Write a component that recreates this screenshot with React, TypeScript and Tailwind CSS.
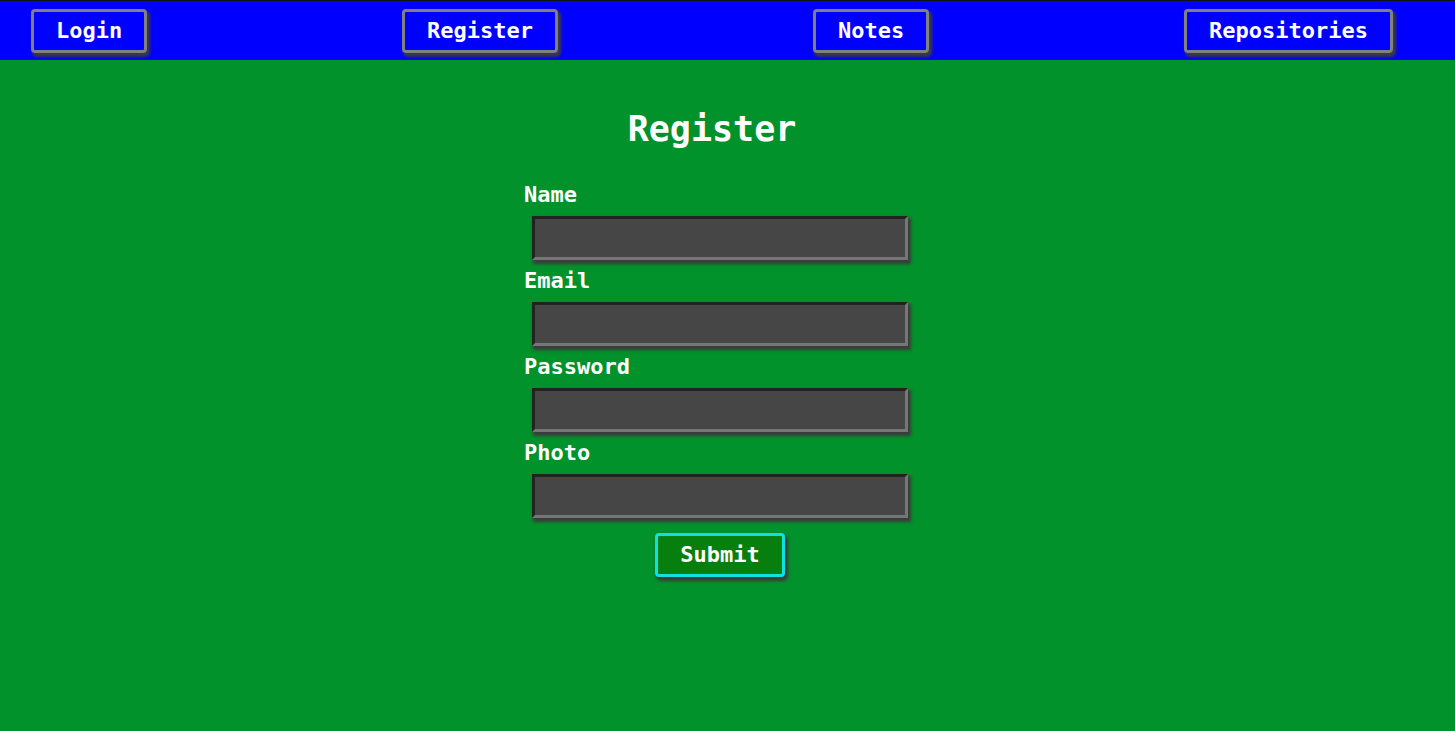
const links = ["Login", "Register", "Notes", "Repositories"];

const fields = [
  { id: "name", label: "Name", type: "text" },
  { id: "email", label: "Email", type: "email" },
  { id: "password", label: "Password", type: "password" },
  { id: "photo", label: "Photo", type: "text" },
];

export default function App() {
  return (
    <div className="min-h-screen bg-[#02922b] font-['DejaVu_Sans_Mono',monospace] text-[22px] leading-[26px] font-bold text-white">
      <nav className="flex items-center justify-between border-t border-[#111111] bg-[#0000ff] pt-2 pr-[62px] pb-[7px] pl-[31px]">
        {links.map((link) => (
          <a
            key={link}
            href={`#${link.toLowerCase()}`}
            className="flex h-11 items-center rounded-sm border-3 border-[#808080] px-[22px] shadow-[2px_3px_3px_1px_#3b3b3b]"
          >
            {link}
          </a>
        ))}
      </nav>

      <main className="flex flex-col items-center pt-[47px] pr-[15px]">
        <h1 className="mr-4 text-[35px] leading-[44px]">Register</h1>
        <form className="mt-[31px] flex w-[392px] flex-col" onSubmit={(e) => e.preventDefault()}>
          {fields.map((field) => (
            <div key={field.id} className="mb-2 flex flex-col gap-2">
              <label htmlFor={field.id}>{field.label}</label>
              <input
                id={field.id}
                name={field.id}
                type={field.type}
                className="mx-2 h-11 border-3 border-t-[#222222] border-r-[#767676] border-b-[#767676] border-l-[#222222] bg-[#464646] px-2 shadow-[2px_3px_3px_1px_#3b3b3b] outline-none"
              />
            </div>
          ))}
          <button
            type="submit"
            className="mt-[7px] flex h-11 items-center self-center rounded-sm border-3 border-[#0fe0e0] bg-[#067f0e] px-[22px] shadow-[2px_3px_3px_1px_#3b3b3b]"
          >
            Submit
          </button>
        </form>
      </main>
    </div>
  );
}
